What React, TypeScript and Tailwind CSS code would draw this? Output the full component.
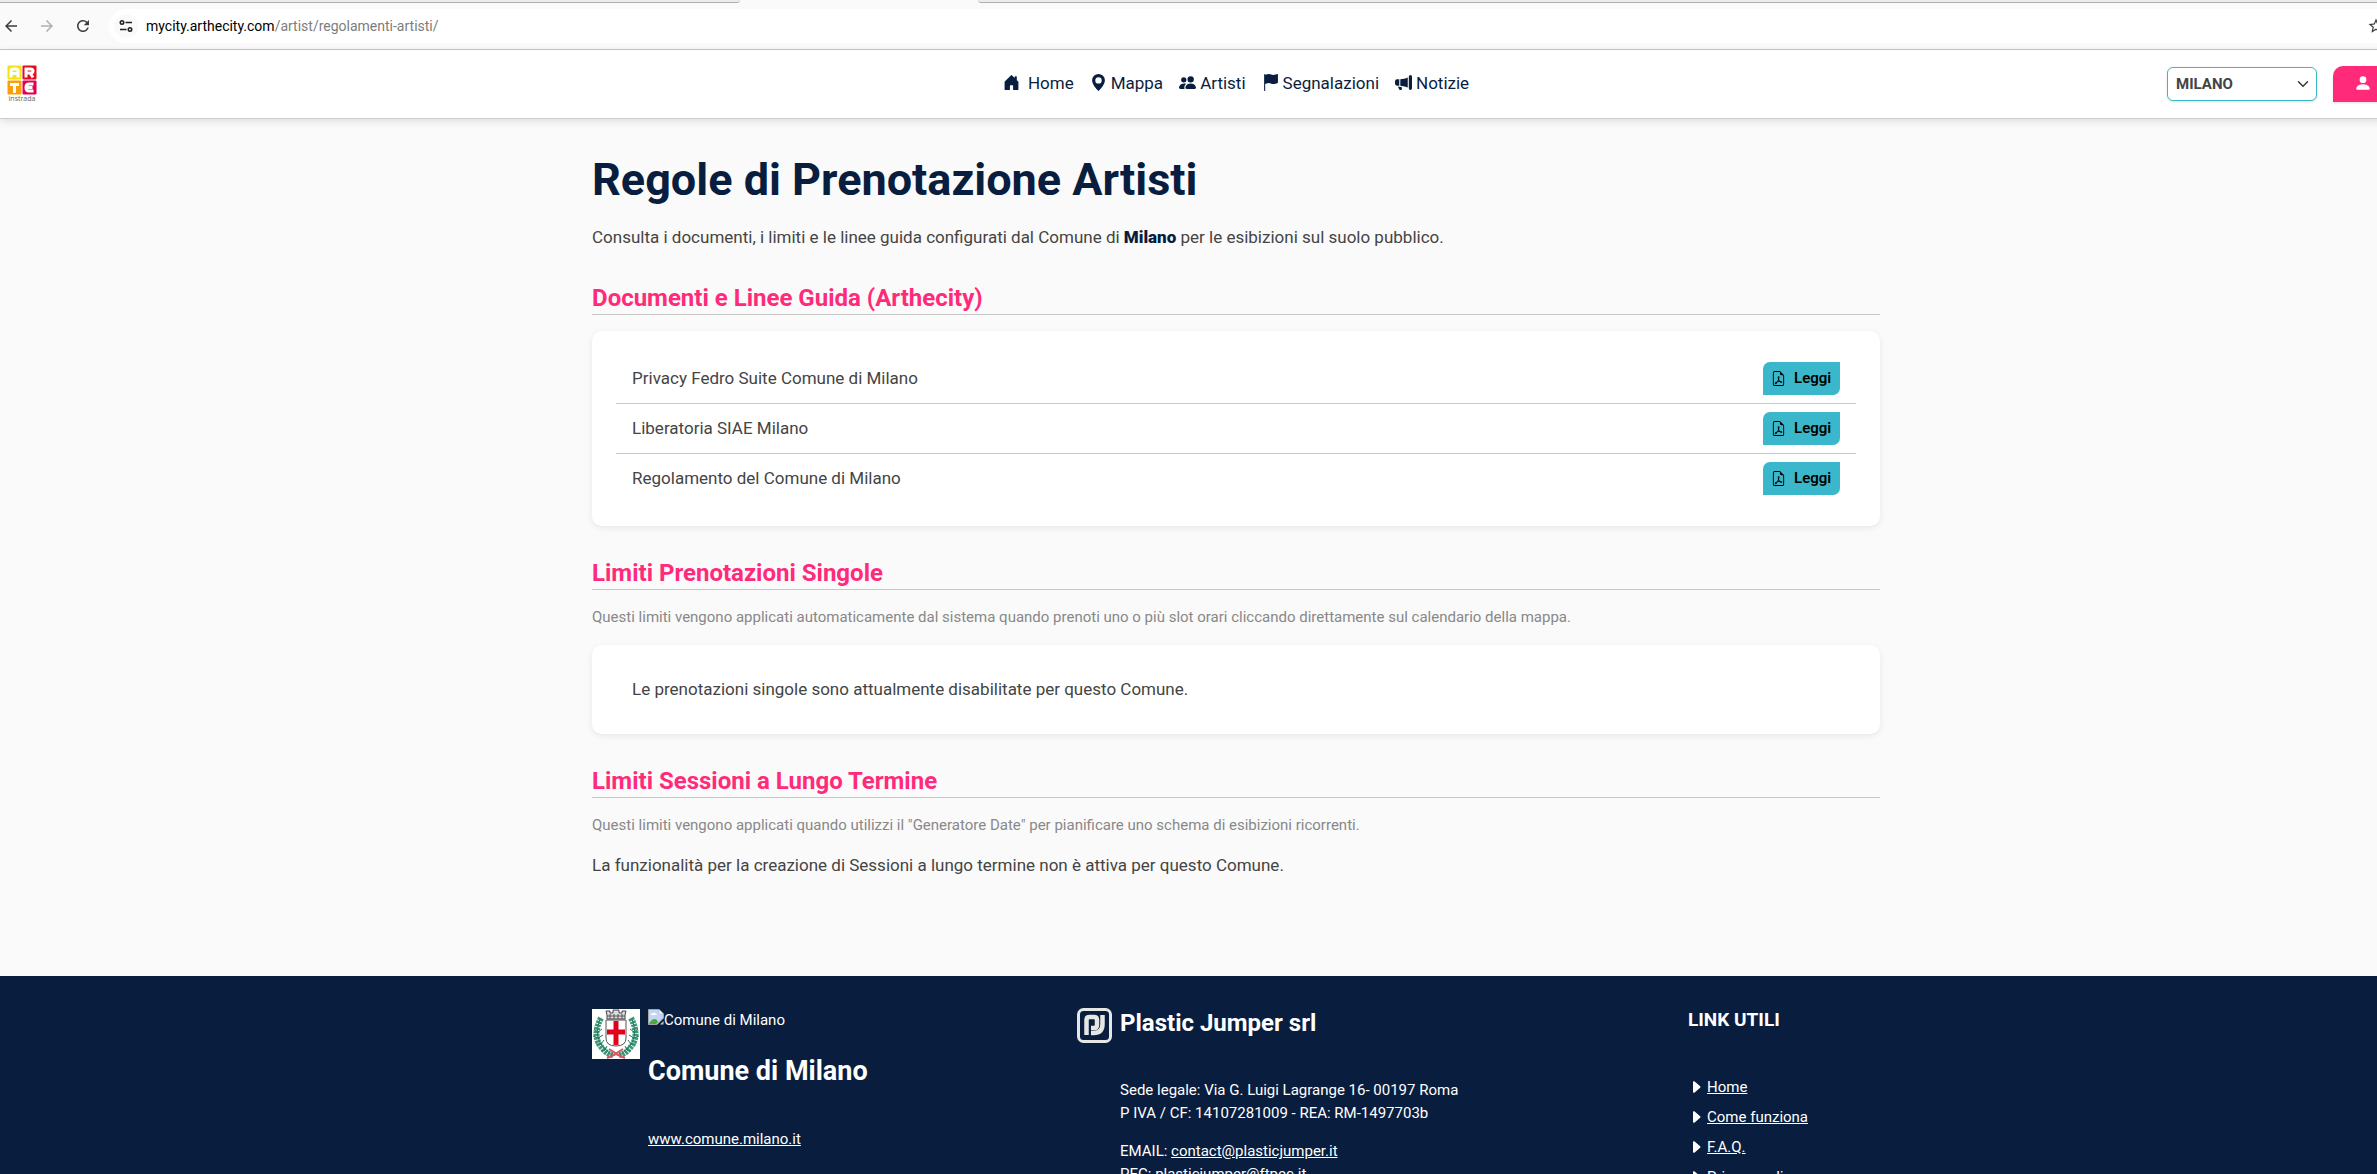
import type { ReactNode } from 'react'
import {
  BsCaretRightFill,
  BsFileEarmarkPdf,
  BsFlagFill,
  BsGeoAltFill,
  BsHouseDoorFill,
  BsMegaphoneFill,
  BsPeopleFill,
  BsPersonFill,
} from 'react-icons/bs'
import { MdArrowBack, MdArrowForward, MdRefresh, MdStarBorder } from 'react-icons/md'

const documents = [
  'Privacy Fedro Suite Comune di Milano',
  'Liberatoria SIAE Milano',
  'Regolamento del Comune di Milano',
]

const footerLinks = ['Home', 'Come funziona', 'F.A.Q.', 'Privacy policy']

function BrowserBar() {
  return (
    <div className="shrink-0 border-b border-[#c9c9c9] bg-[#fafafa]">
      {/* Bottom edge of the tab strip */}
      <div className="flex h-[3px] bg-[#fafafa]">
        <div className="w-[740px] rounded-br-lg border-b border-[#b0b0b0] bg-[#ebebeb]" />
        <div className="w-[238px]" />
        <div className="flex-1 rounded-bl-lg border-b border-[#b0b0b0] bg-[#ebebeb]" />
      </div>
      <div className="flex h-[46px] items-center">
        <button aria-label="Indietro" className="ml-[2px] text-[#3c3c3c]">
          <MdArrowBack size={18} />
        </button>
        <button aria-label="Avanti" disabled className="ml-[18px] text-[#b0b0b0]">
          <MdArrowForward size={18} />
        </button>
        <button aria-label="Ricarica" className="ml-[18px] text-[#3c3c3c]">
          <MdRefresh size={18} />
        </button>
        <div className="ml-[17px] flex h-[34px] flex-1 items-center rounded-l-full bg-white pl-[5px]">
          <button aria-label="Informazioni sul sito" className="flex size-6 items-center justify-center rounded-full bg-[#fafafa]">
            <svg width="14" height="14" viewBox="0 0 14 14" fill="none" stroke="#222" strokeWidth="1.6">
              <circle cx="3" cy="3.5" r="1.7" />
              <path d="M6.5 3.5H13M1 10.5h6.5" />
              <circle cx="11" cy="10.5" r="1.7" />
            </svg>
          </button>
          <span className="ml-2 text-[14px] text-black">
            mycity.arthecity.com<span className="text-[#7d7d7d]">/artist/regolamenti-artisti/</span>
          </span>
          <button aria-label="Aggiungi ai preferiti" className="-mr-2 ml-auto text-[#3c3c3c]">
            <MdStarBorder size={18} />
          </button>
        </div>
      </div>
    </div>
  )
}

function Logo() {
  return (
    <svg width="30" height="38" viewBox="0 0 30 38" role="img" aria-label="Arte in strada">
      <rect x="0.5" y="0.5" width="14" height="14" rx="1" fill="#f5e216" />
      <rect x="15.5" y="0.5" width="14" height="14" rx="1" fill="#e30b20" />
      <rect x="0.5" y="15.5" width="14" height="14" rx="1" fill="#f8a00c" />
      <rect x="15.5" y="15.5" width="14" height="14" rx="1" fill="#e4004b" />
      <g fill="none" stroke="#fff" strokeWidth="3">
        <path d="M4 12.5V6q0-2 2-2h3q2 0 2 2v6.5M4 8.5h7" />
        <path d="M19 12.5V4h4.5q2.5 0 2.5 2t-2.5 2H19M23 8l3 4.5" />
        <path d="M3 19.5h9M7.5 19v9" />
        <path d="M26.5 19H22q-3 0-3 3.5t3 3.500h4.500M20 22.500h5.500" />
      </g>
      <text x="15" y="36" textAnchor="middle" fontSize="7" fill="#666" fontFamily="Open Sans, sans-serif">
        instrada
      </text>
    </svg>
  )
}

function NavLink({ icon, children }: { icon: ReactNode; children: ReactNode }) {
  return (
    <a href="#" className="flex items-center gap-1">
      <span className="mb-[3px]">{icon}</span>
      {children}
    </a>
  )
}

function Header() {
  return (
    <header className="relative grid h-[69px] grid-cols-[1fr_auto_1fr] items-center border-b border-[#ccc] bg-white shadow-[0_2px_8px_rgba(0,0,0,0.12)]">
      <a href="#" className="ml-[7px] w-fit">
        <Logo />
      </a>
      <nav className="flex items-center gap-4 text-[17px] text-[#091e3e]">
        <NavLink icon={<BsHouseDoorFill size={17} className="mr-1" />}>Home</NavLink>
        <NavLink icon={<BsGeoAltFill size={17} />}>Mappa</NavLink>
        <NavLink icon={<BsPeopleFill size={17} />}>Artisti</NavLink>
        <NavLink icon={<BsFlagFill size={17} />}>Segnalazioni</NavLink>
        <NavLink icon={<BsMegaphoneFill size={17} />}>Notizie</NavLink>
      </nav>
      <div className="flex items-center justify-end gap-4 pr-[28px]">
        <div className="relative">
          <select
            aria-label="Comune"
            className="h-[34px] w-[150px] appearance-none rounded-md border border-[#3bb7cb] bg-white pl-2 text-[15px] font-bold text-[#444] shadow-sm"
          >
            <option>MILANO</option>
          </select>
          <svg className="pointer-events-none absolute top-[11px] right-2" width="12" height="12" viewBox="0 0 16 16" fill="none" stroke="#343a40" strokeWidth="2" strokeLinecap="round" strokeLinejoin="round">
            <path d="m2 5 6 6 6-6" />
          </svg>
        </div>
        <button aria-label="Profilo" className="flex h-9 w-[111px] items-center rounded-tl-[10px] rounded-br-[10px] bg-[#ff2a7a] pb-[2px] pl-[21px] text-white shadow-sm">
          <BsPersonFill size={18} />
        </button>
      </div>
    </header>
  )
}

function SectionTitle({ children }: { children: ReactNode }) {
  return (
    <h2 className="mt-8 mb-4 border-b border-[#c8c8c8] text-[24px] leading-[31px] font-bold text-[#ff2a7a]">
      {children}
    </h2>
  )
}

function Card({ children }: { children: ReactNode }) {
  return <div className="rounded-[10px] bg-white px-6 shadow-[0_2px_6px_rgba(0,0,0,0.08)]">{children}</div>
}

function Crest() {
  return (
    <svg width="48" height="50" viewBox="0 0 48 50" role="img" aria-label="Stemma di Milano" className="shrink-0 bg-white">
      <g fill="none" stroke="#3d9878" strokeWidth="6" strokeDasharray="2.5 0.8">
        <path d="M9 9Q-1 28 11 40q4 5 10 6" />
        <path d="M39 9q10 19-2 31-4 5-10 6" />
      </g>
      <g fill="none" stroke="#267a60" strokeWidth="1">
        <path d="M8 10Q1 28 12 39t10 6M40 10q7 18-4 29t-10 6" />
        <path d="m2 20 4 3 4-3M1 27l5 2 5-3M4 35l5 0 3-4M9 42l4-1 2-4M46 20l-4 3-4-3M47 27l-5 2-5-3M44 35l-5 0-3-4M39 42l-4-1-2-4" />
      </g>
      <path d="M14 11h20v18q0 8-10 8t-10-8z" fill="#fff" stroke="#555" strokeWidth="1" />
      <path d="M24 12v24M15 23h18" stroke="#e2001a" strokeWidth="5" />
      <path d="M15 10V6l-1-4h4v2h3V1h6v3h3V2h4l-1 4v4z" fill="#ddd" stroke="#444" strokeWidth="1" />
      <path d="M18 5v5m4-5v5m4-5v5m4-5v5M15 7h18" stroke="#555" strokeWidth="1" />
      <path d="m17 40 13 8M31 40l-13 8M15 49l9-4 9 4" fill="none" stroke="#dc5560" strokeWidth="2" />
    </svg>
  )
}

function BrokenImage() {
  return (
    <svg width="16" height="16" viewBox="0 0 16 16" className="shrink-0" aria-hidden="true">
      <path d="M0.5 0.5H11L15.5 5v4L9 15.5H0.5z" fill="#c3d5f5" stroke="#a5a5a5" />
      <path d="M11 0.5V5h4.5z" fill="#fff" stroke="#a5a5a5" strokeWidth="0.5" />
      <path d="M3 6q0-2 2-2 2-1 3 1 1 0 1 1z" fill="#fff" />
      <path d="M1 15q2-5 6-5 2 0 3 3l-2 2z" fill="#4da83e" />
      <path d="M12 15.5h3.5V12z" fill="#c8c8c8" />
    </svg>
  )
}

function PlasticJumperLogo() {
  return (
    <svg width="35" height="35" viewBox="0 0 35 35" role="img" aria-label="Plastic Jumper" className="shrink-0">
      <rect x="1.5" y="1.5" width="32" height="32" rx="5" fill="none" stroke="#e6e7e4" strokeWidth="3" />
      <g fill="none" stroke="#e6e7e4" strokeWidth="4.5">
        <path d="M9.500 27V12q0-3 3-3H17q3 0 3 3v5q0 3-3 3h-3" />
        <path d="M25.500 7v9q0 9-9 9H14" />
      </g>
    </svg>
  )
}

function Footer() {
  return (
    <footer className="bg-[#091e3e] pt-8 text-[15px] leading-[23px] text-white">
      <div className="mx-auto grid max-w-[1320px] grid-cols-[485fr_611fr_192fr] px-4">
        <div className="flex items-start gap-2 pt-px">
          <Crest />
          <div>
            <div className="flex items-start">
              <BrokenImage />
              <span>Comune di Milano</span>
            </div>
            <h3 className="mt-[22px] text-[27px] leading-[34px] font-bold">Comune di Milano</h3>
            <a href="#" className="mt-10 inline-block underline">
              www.comune.milano.it
            </a>
          </div>
        </div>
        <div className="flex items-start gap-2">
          <PlasticJumperLogo />
          <div>
            <h3 className="text-[24px] leading-[30px] font-bold">Plastic Jumper srl</h3>
            <p className="mt-[41px]">
              Sede legale: Via G. Luigi Lagrange 16- 00197 Roma
              <br />P IVA / CF: 14107281009 - REA: RM-1497703b
            </p>
            <p className="mt-[15px]">
              EMAIL: <a href="#" className="underline">contact@plasticjumper.it</a>
              <br />PEC: <a href="#" className="underline">plasticjumper@ftpec.it</a>
            </p>
          </div>
        </div>
        <div>
          <h3 className="text-[19px] leading-[24px] font-bold">LINK UTILI</h3>
          <ul className="mt-10">
            {footerLinks.map((label) => (
              <li key={label} className="flex h-[30px] items-center gap-[3px]">
                <BsCaretRightFill size={16} />
                <a href="#" className="underline">{label}</a>
              </li>
            ))}
          </ul>
        </div>
      </div>
    </footer>
  )
}

export default function App() {
  return (
    <div className="flex h-screen flex-col overflow-hidden bg-[#fafafa] font-[Roboto,sans-serif]">
      <BrowserBar />
      {/* The page is wider than the visible part of the window */}
      <div className="min-h-0 w-[104%] flex-1">
        <Header />
        <main className="mx-auto max-w-[1320px] px-4 pt-[34px] pb-[98px] text-[17px] leading-[25px] text-[#444]">
          <h1 className="mb-[17px] text-[45px] leading-[54px] font-bold text-[#091e3e]">Regole di Prenotazione Artisti</h1>
          <p className="mb-[33px] leading-[26px]">
            Consulta i documenti, i limiti e le linee guida configurati dal Comune di{' '}
            <strong className="font-black text-[#091e3e]">Milano</strong> per le esibizioni sul suolo pubblico.
          </p>

          <SectionTitle>Documenti e Linee Guida (Arthecity)</SectionTitle>
          <Card>
            <ul className="divide-y divide-[#c8c8c8] py-[23px]">
              {documents.map((name) => (
                <li key={name} className="flex items-center justify-between px-4 py-2">
                  <span>{name}</span>
                  <button className="flex h-[33px] w-[77px] items-center gap-2 rounded-tl-[7px] rounded-br-[7px] bg-[#3bb7cb] pl-2 text-[15px] font-semibold text-black">
                    <BsFileEarmarkPdf size={15} /> Leggi
                  </button>
                </li>
              ))}
            </ul>
          </Card>

          <SectionTitle>Limiti Prenotazioni Singole</SectionTitle>
          <p className="mb-4 text-[15px] leading-[23px] text-[#888]">
            Questi limiti vengono applicati automaticamente dal sistema quando prenoti uno o più slot orari cliccando
            direttamente sul calendario della mappa.
          </p>
          <Card>
            <p className="px-4 py-8">Le prenotazioni singole sono attualmente disabilitate per questo Comune.</p>
          </Card>

          <SectionTitle>Limiti Sessioni a Lungo Termine</SectionTitle>
          <p className="mb-4 text-[15px] leading-[23px] text-[#888]">
            Questi limiti vengono applicati quando utilizzi il "Generatore Date" per pianificare uno schema di
            esibizioni ricorrenti.
          </p>
          <p>La funzionalità per la creazione di Sessioni a lungo termine non è attiva per questo Comune.</p>
        </main>
        <Footer />
      </div>
    </div>
  )
}
